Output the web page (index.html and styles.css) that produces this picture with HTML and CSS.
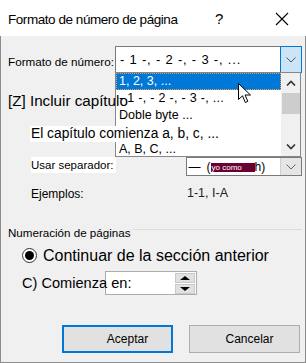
FILE: index.html
```html
<!DOCTYPE html>
<html lang="es">

<head>
    <meta charset="UTF-8">
    <title>Formato de número de página</title>
    <link rel="stylesheet" href="styles.css">
</head>

<body>
    <div class="window">
        <div class="titlebar">
            <span class="title">Formato de número de página</span>
            <span class="help">?</span>
            <svg class="close" width="14" height="14" viewBox="0 0 14 14">
                <path d="M1 1 L13 13 M13 1 L1 13" stroke="#000" stroke-width="1.1" fill="none" />
            </svg>
        </div>

        <div class="dialog-body">
            <div class="row row-format">
                <span class="label">Formato de número:</span>
                <div class="combo combo-format">
                    <span class="combo-value format-value">- 1 -, - 2 -, - 3 -, ...</span>
                    <span class="combo-btn combo-btn-active">
                        <svg width="10" height="6" viewBox="0 0 10 6">
                            <path d="M0.5 0.5 L5 5 L9.5 0.5" stroke="#555" fill="none" />
                        </svg>
                    </span>
                    <div class="dropdown">
                        <ul class="dropdown-list">
                            <li class="selected">1, 2, 3, ...</li>
                            <li class="wide-item">- 1 -, - 2 -, - 3 -, ...</li>
                            <li>Doble byte ...</li>
                            <li class="hidden-item"></li>
                            <li>A, B, C, ...</li>
                        </ul>
                        <div class="scrollbar">
                            <svg class="scroll-arrow" width="10" height="6" viewBox="0 0 10 6">
                                <path d="M1 5.5 L5 1.5 L9 5.5" stroke="#333" stroke-width="1.6" fill="none" />
                            </svg>
                            <div class="scroll-thumb"></div>
                            <svg class="scroll-arrow scroll-down" width="10" height="6" viewBox="0 0 10 6">
                                <path d="M1 0.5 L5 4.5 L9 0.5" stroke="#333" stroke-width="1.6" fill="none" />
                            </svg>
                        </div>
                    </div>
                </div>
            </div>

            <div class="row row-chapter">[Z] Incluir capítulo</div>

            <div class="row row-starts">
                <span class="white-label starts-label">El capítulo comienza a, b, c, ...</span>
            </div>

            <div class="row row-sep">
                <span class="white-label sep-label">Usar separador:</span>
                <div class="combo combo-sep">
                    <span class="combo-value sep-value">
                        <span class="dash">—</span> (<span class="tag">yo como</span>h)
                    </span>
                    <span class="combo-btn">
                        <svg width="10" height="6" viewBox="0 0 10 6">
                            <path d="M0.5 0.5 L5 5 L9.5 0.5" stroke="#666" fill="none" />
                        </svg>
                    </span>
                </div>
            </div>

            <div class="row row-examples">
                <span class="examples-label">Ejemplos:</span>
                <span class="examples-value">1-1, I-A</span>
            </div>

            <div class="group-title">
                <span>Numeración de páginas</span>
                <span class="group-line"></span>
            </div>

            <div class="row radio-row">
                <span class="radio"><span class="radio-dot"></span></span>
                <span class="radio-text">Continuar de la sección anterior</span>
            </div>

            <div class="row spin-row">
                <span class="spin-label">C) Comienza en:</span>
                <div class="spinbox">
                    <div class="spin-buttons">
                        <span class="spin-btn"><span class="tri-up"></span></span>
                        <span class="spin-btn"><span class="tri-down"></span></span>
                    </div>
                </div>
            </div>

            <div class="buttons">
                <button class="btn btn-default">Aceptar</button>
                <button class="btn btn-cancel">Cancelar</button>
            </div>
        </div>

        <svg class="cursor" width="14" height="21" viewBox="0 0 14 21">
            <path d="M0.5 0.5 L0.5 16.5 L4.5 12.8 L7.3 19.5 L9.8 18.4 L7.1 12 L12.5 12 Z" fill="#fff" stroke="#000" stroke-width="1" stroke-linejoin="miter" />
        </svg>
    </div>
</body>

</html>
```

FILE: styles.css
```css
:root {
    --body-bg: #f0f0f0;
    --accent: #0078d7;
    --border-gray: #7a7a7a;
    --light-border: #adadad;
    --btn-bg: #e1e1e1;
}

* {
    box-sizing: border-box;
    margin: 0;
    padding: 0;
}

body {
    width: 306px;
    height: 363px;
    overflow: hidden;
    font-family: "Liberation Sans", Arial, sans-serif;
    font-size: 12px;
    color: #000;
    background-color: #fff;
}

.window {
    position: relative;
    width: 306px;
    height: 363px;
    display: flex;
    flex-direction: column;
}

/* Title bar */
.titlebar {
    height: 36px;
    flex-shrink: 0;
    background-color: #fff;
    display: flex;
    align-items: center;
    padding-left: 8px;
}

.title {
    font-size: 13.5px;
    letter-spacing: -0.45px;
    flex-grow: 1;
    padding-top: 2px;
}

.help {
    font-size: 15px;
    width: 12px;
    margin-right: 48px;
    padding-top: 1px;
}

.close {
    margin-right: 17px;
    margin-top: 2px;
}

/* Dialog body */
.dialog-body {
    flex-grow: 1;
    background-color: var(--body-bg);
    border: 1px solid #8c8c8c;
    border-top: none;
    padding: 0 3px 9px 7px;
    display: flex;
    flex-direction: column;
}

.row {
    display: flex;
    align-items: center;
}

.row-format {
    margin-top: 10px;
    height: 27px;
}

.label {
    flex: 0 0 107px;
    font-size: 11.7px;
    padding-top: 3px;
}

.combo {
    position: relative;
    display: flex;
    align-items: stretch;
    background-color: #fff;
    border: 1px solid var(--border-gray);
}

.combo-format {
    width: 187px;
    height: 27px;
}

.combo-value {
    flex-grow: 1;
    display: flex;
    align-items: center;
    padding-left: 4px;
    font-size: 13px;
    white-space: nowrap;
}

.format-value {
    letter-spacing: 0.8px;
}

.combo-btn {
    width: 21px;
    display: flex;
    align-items: center;
    justify-content: center;
    background-color: #e5e5e5;
    border-left: 1px solid #cfcfcf;
}

.combo-btn-active {
    background-color: #cce4f7;
    border: 1px solid var(--accent);
    margin: -1px -1px -1px 0;
    width: 22px;
}

/* Open list of the format combo */
.dropdown {
    position: absolute;
    top: 100%;
    left: -1px;
    width: 186px;
    height: 85px;
    background-color: #fff;
    border: 1px solid #828790;
    display: flex;
    z-index: 2;
}

.dropdown-list {
    list-style: none;
    flex-grow: 1;
}

.dropdown-list li {
    height: 17px;
    line-height: 16px;
    padding-left: 3px;
    font-size: 12.5px;
    white-space: nowrap;
    overflow: hidden;
}

.dropdown-list li.wide-item {
    letter-spacing: 0.3px;
}

.dropdown-list li.selected {
    background-color: var(--accent);
    color: #fff;
    border: 1px dotted #e8a050;
    padding-left: 2px;
    line-height: 14px;
}

.scrollbar {
    width: 19px;
    background-color: var(--body-bg);
    display: flex;
    flex-direction: column;
    align-items: center;
}

.scroll-arrow {
    margin-top: 7px;
}

.scroll-thumb {
    width: 18px;
    height: 21px;
    margin-top: 7px;
    background-color: #cdcdcd;
}

.scroll-down {
    margin-top: auto;
    margin-bottom: 6px;
}

.row-chapter {
    position: relative;
    z-index: 3;
    margin-top: 16px;
    height: 22px;
    font-size: 15.2px;
    width: max-content;
}

.white-label {
    position: relative;
    z-index: 3;
    background-color: #fff;
    height: 16px;
    line-height: 16px;
    white-space: nowrap;
}

.row-starts {
    margin-top: 15px;
    height: 16px;
}

.starts-label {
    margin-left: 22px;
    width: 188px;
    padding-left: 1px;
    font-size: 13.8px;
}

.row-sep {
    margin-top: 15px;
    height: 19px;
    align-items: flex-start;
}

.sep-label {
    margin-left: 23px;
    width: 85px;
    font-size: 11.5px;
}

.combo-sep {
    margin-left: 70px;
    width: 117px;
    height: 19px;
}

.sep-value {
    font-size: 12px;
    padding-left: 2px;
}

.dash {
    margin-right: 6px;
}

.tag {
    display: inline-block;
    background-color: #6a0032;
    color: #fff;
    font-size: 8px;
    line-height: 9px;
    height: 9px;
    width: 44px;
    padding-left: 1px;
    margin-top: 1px;
}

.row-examples {
    margin-top: 10px;
    height: 16px;
}

.examples-label {
    margin-left: 23px;
    width: 156px;
}

.examples-value {
    margin-top: -3px;
    font-size: 12.5px;
    color: #222;
}

/* Group: page numbering */
.group-title {
    margin-top: 22px;
    height: 16px;
    display: flex;
    align-items: center;
    font-size: 11.6px;
}

.group-line {
    flex-grow: 1;
    height: 1px;
    background-color: #dcdcdc;
    margin: -6px 0 0 3px;
}

.radio-row {
    margin-top: 4px;
    height: 22px;
}

.radio {
    margin-left: 14px;
    width: 15px;
    height: 15px;
    border-radius: 50%;
    border: 1px solid #333;
    background-color: #fff;
    display: flex;
    align-items: center;
    justify-content: center;
}

.radio-dot {
    width: 9px;
    height: 9px;
    border-radius: 50%;
    background-color: #000;
}

.radio-text {
    margin-left: 6px;
    font-size: 16px;
    padding-top: 1px;
}

/* Spinner row uses one grid cell so the label can run over the box */
.spin-row {
    margin-top: 5px;
    display: grid;
    align-items: center;
}

.spin-label,
.spinbox {
    grid-area: 1 / 1;
}

.spin-label {
    position: relative;
    z-index: 1;
    margin-left: 14px;
    font-size: 14.6px;
}

.spinbox {
    margin-left: 97px;
    width: 92px;
    height: 24px;
    background-color: #fff;
    border: 1px solid var(--light-border);
    display: flex;
    justify-content: flex-end;
    align-items: center;
    padding-right: 1px;
}

.spin-buttons {
    width: 20px;
    height: 21px;
    display: flex;
    flex-direction: column;
    gap: 1px;
}

.spin-btn {
    flex: 1;
    background-color: var(--btn-bg);
    border: 1px solid #c8c8c8;
    display: flex;
    align-items: center;
    justify-content: center;
}

.tri-up {
    width: 0;
    height: 0;
    border-left: 5px solid transparent;
    border-right: 5px solid transparent;
    border-bottom: 4px solid #000;
}

.tri-down {
    width: 0;
    height: 0;
    border-left: 5px solid transparent;
    border-right: 5px solid transparent;
    border-top: 4px solid #000;
}

/* Bottom buttons */
.buttons {
    margin-top: auto;
    display: flex;
    justify-content: flex-end;
    gap: 16px;
    padding-right: 2px;
}

.btn {
    width: 111px;
    height: 28px;
    background-color: var(--btn-bg);
    border: 1px solid var(--light-border);
    font-family: "Liberation Sans", Arial, sans-serif;
    font-size: 12px;
    color: #000;
}

.btn-default {
    border: 2px solid var(--accent);
    padding-left: 20px;
}

.btn-cancel {
    padding-left: 10px;
}

/* Mouse pointer over the list */
.cursor {
    position: absolute;
    left: 238px;
    top: 83px;
    z-index: 10;
}
```
